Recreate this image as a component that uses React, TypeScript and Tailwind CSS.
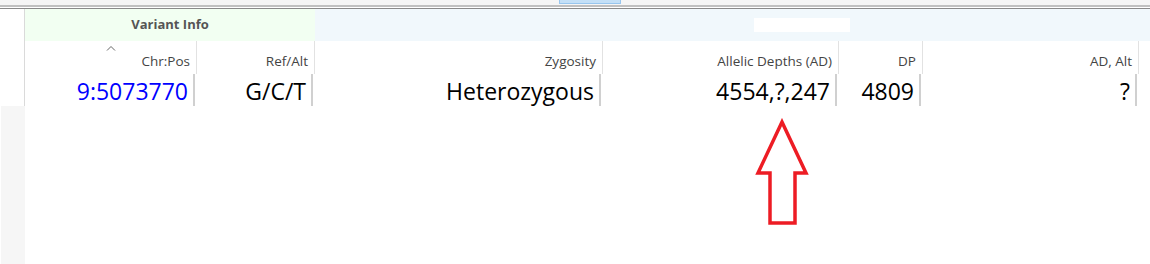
import React from "react";

type Col = { label: string; value: string; w: string; blue?: boolean };

const cols: Col[] = [
  { label: "Chr:Pos", value: "9:5073770", w: "w-[172px]", blue: true },
  { label: "Ref/Alt", value: "G/C/T", w: "w-[118px]" },
  { label: "Zygosity", value: "Heterozygous", w: "w-[288px]" },
  { label: "Allelic Depths (AD)", value: "4554,?,247", w: "w-[236px]" },
  { label: "DP", value: "4809", w: "w-[84px]" },
  { label: "AD, Alt", value: "?", w: "w-[216px]" },
];

export default function App() {
  return (
    <div
      className="relative w-[1150px] h-[264px] bg-white overflow-hidden flex flex-col"
      style={{ fontFamily: '"Open Sans", "Noto Sans", sans-serif' }}
    >
      {/* window chrome */}
      <div className="h-[5px] bg-[#f5f5f5] relative shrink-0">
        <div className="absolute left-[559px] top-0 w-[62px] h-[4px] bg-[#c4e0f7] border border-t-0 border-[#98c6ee]" />
      </div>
      <div className="h-[2px] bg-[#c0c0c0] shrink-0" />
      <div className="h-[1px] bg-white shrink-0" />
      <div className="h-[1px] bg-[#8a8a8a] shrink-0" />

      <div className="flex flex-1">
        {/* row gutter */}
        <div className="w-[25px] flex flex-col shrink-0">
          <div className="h-[97px] border-r border-[#dadada]" />
          <div className="flex-1 bg-[#f6f6f6] ml-[1px]" />
        </div>

        <div className="flex-1 flex flex-col">
          {/* group header */}
          <div className="flex h-[32px]">
            <div className="w-[290px] bg-[#f2fff2] flex items-center justify-center text-[13px] font-bold text-[#555]">
              Variant Info
            </div>
            <div className="flex-1 bg-[#f1f8fc] flex items-center">
              <div className="ml-[439px] w-[96px] h-[14px] bg-white" />
            </div>
          </div>

          {/* column header */}
          <div className="flex h-[33px]">
            {cols.map((c, i) => (
              <div
                key={c.label}
                className={`${c.w} relative flex items-end justify-end pr-[6px] pb-[6px] border-r border-[#e2e2e2] text-[13.5px] text-[#444] leading-none`}
              >
                {i === 0 && (
                  <svg className="absolute left-[81px] top-[4px]" width="10" height="6" viewBox="0 0 10 6">
                    <path d="M1 5.5 L5 1.5 L9 5.5" stroke="#666" strokeWidth="1" fill="none" />
                  </svg>
                )}
                {c.label}
              </div>
            ))}
          </div>

          {/* data row */}
          <div className="flex h-[32px]">
            {cols.map((c) => (
              <div key={c.label} className={`${c.w} flex`}>
                <div
                  className={`flex-1 flex items-center justify-end pr-[5px] pt-[2px] border-r-2 border-[#d0d0d0] text-[23px] leading-none ${
                    c.blue ? "text-[#0000ff]" : "text-black"
                  }`}
                >
                  {c.value}
                </div>
                <div className="w-[2px]" />
              </div>
            ))}
          </div>
        </div>
      </div>

      {/* annotation arrow */}
      <svg className="absolute left-[755px] top-[118px]" width="56" height="110" viewBox="0 0 56 110">
        <path
          d="M27 4 L51 55 L40 55 L40 105 L15 105 L15 55 L3 55 Z"
          stroke="#ed1c24"
          strokeWidth="3.5"
          strokeLinejoin="miter"
          fill="none"
        />
      </svg>
    </div>
  );
}
